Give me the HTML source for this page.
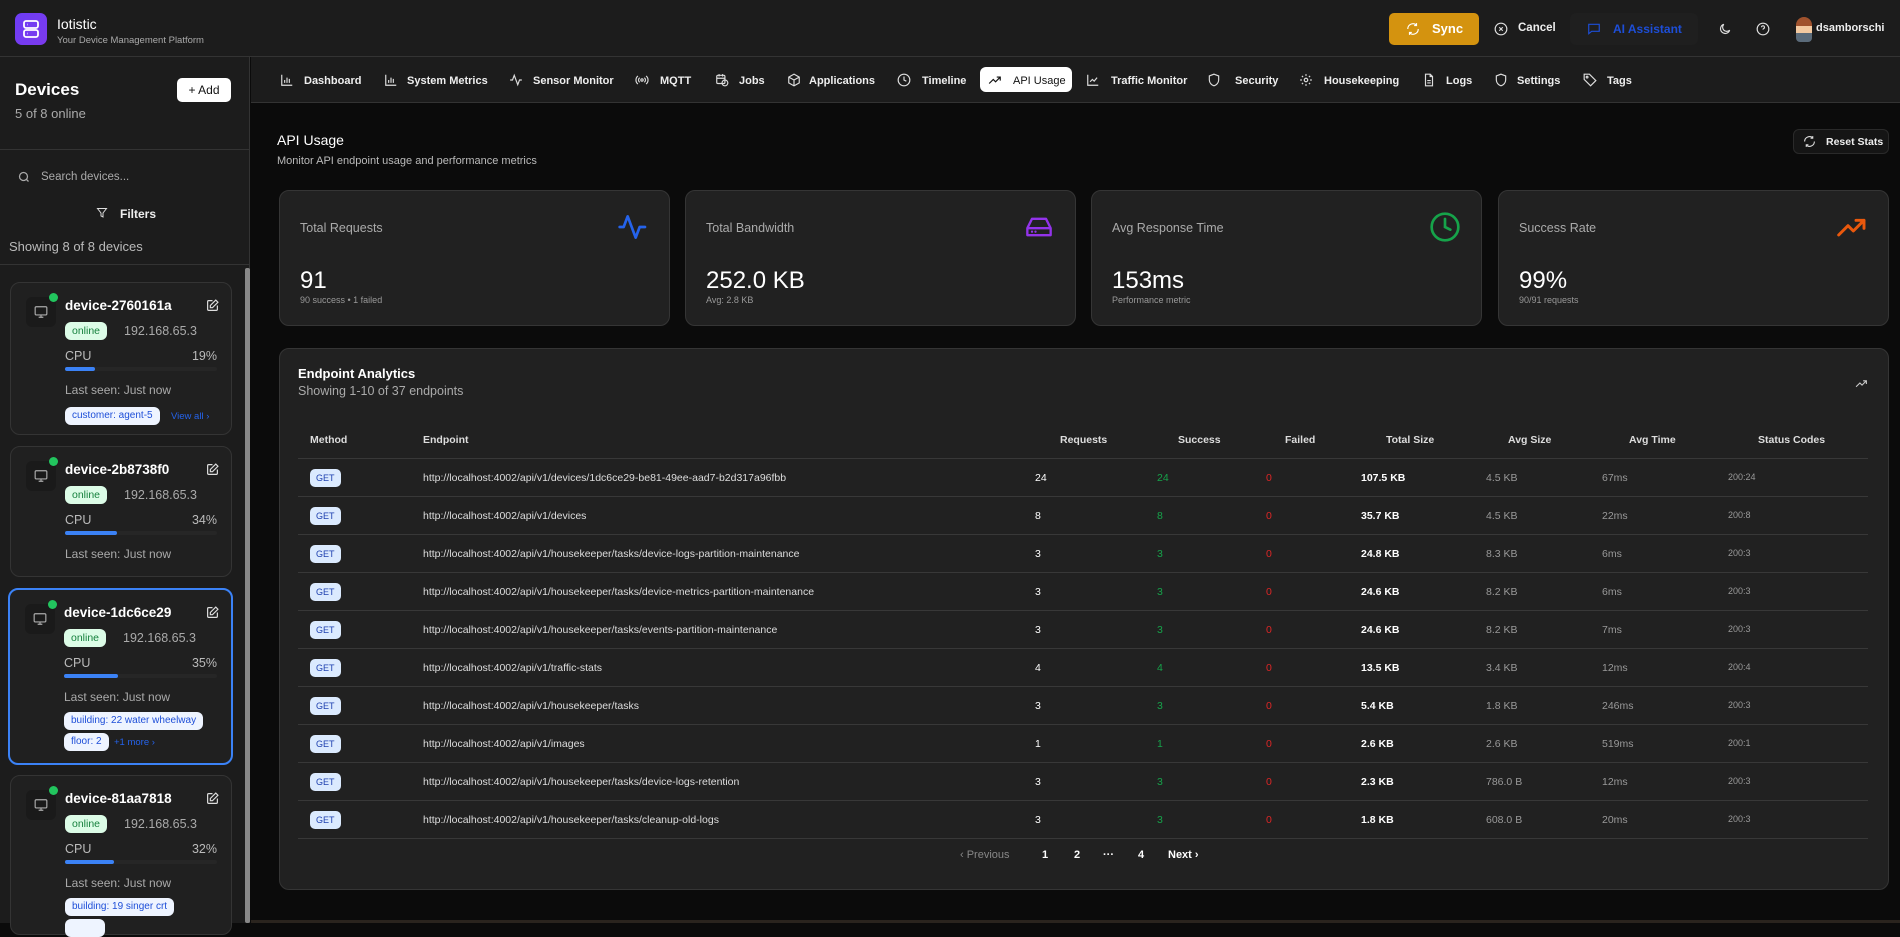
<!DOCTYPE html>
<html><head><meta charset="utf-8"><style>
*{box-sizing:border-box;margin:0;padding:0}
body{width:1900px;height:923px;overflow:hidden;background:#0b0b0b;font-family:"Liberation Sans",sans-serif;color:#fff;position:relative}
.a{position:absolute;white-space:nowrap}
svg{display:block}
.hdr{left:0;top:0;width:1900px;height:57px;background:#1c1c1c;border-bottom:1px solid #333}
.side{left:0;top:57px;width:250px;height:866px;background:#1c1c1c;border-right:1px solid #333;overflow:hidden}
.nav{left:251px;top:57px;width:1649px;height:46px;background:#1c1c1c;border-bottom:1px solid #333}
.tab{font-size:11px;font-weight:bold;color:#eee;top:74px;line-height:14px}
.ti{top:73px}
.card{background:#212121;border:1px solid #353535;border-radius:10px}
.dc{position:absolute;left:10px;width:222px;background:#202020;border:1px solid #343434;border-radius:10px}
.dc .nm{position:absolute;left:54px;top:14px;font-size:13.5px;font-weight:bold;line-height:18px}
.dc .dot{position:absolute;left:38px;top:10px;width:9px;height:9px;border-radius:50%;background:#22c55e}
.dc .ib{position:absolute;left:15px;top:14px;width:30px;height:30px;border-radius:6px;background:#1a1a1a}
.dc .bd{position:absolute;left:54px;top:39px;height:18px;line-height:18px;padding:0 7px;font-size:10.5px;border-radius:6px;background:#dcfce7;color:#15803d}
.dc .ip{position:absolute;left:113px;top:39px;font-size:12.5px;line-height:18px;color:#aaa}
.dc .cp{position:absolute;left:54px;top:66px;font-size:12.5px;color:#bbb}
.dc .pc{position:absolute;right:14px;top:66px;font-size:12.5px;color:#bbb}
.dc .bar{position:absolute;left:54px;right:14px;top:84px;height:4px;background:#262626;border-radius:2px}
.dc .bar i{display:block;height:4px;background:#3b82f6;border-radius:2px}
.dc .ls{position:absolute;left:54px;top:100px;font-size:12px;color:#aaa}
.tg{position:absolute;height:18px;line-height:18px;padding:0 7px;font-size:10px;border-radius:6px;background:#eef4ff;color:#1d4ed8;white-space:nowrap}
.lk{position:absolute;font-size:9.5px;color:#2563eb;white-space:nowrap}
.dc .ed{position:absolute;right:12px;top:16px}
.sl{font-size:12.5px;color:#aaa;left:20px;top:30px}
.sv{font-size:24px;left:20px;top:76px}
.ss{font-size:9px;color:#999;left:20px;top:104px}
.th{font-size:10.5px;font-weight:bold;color:#ddd;top:434px}
.row{position:absolute;left:298px;width:1570px;height:38px;border-top:1px solid #383838}
.c{position:absolute;top:13px;font-size:10.5px;white-space:nowrap}
.get{position:absolute;left:12px;top:10px;height:18px;line-height:18px;padding:0 6px;font-size:9px;border-radius:5px;background:#dbeafe;color:#1e40af}
</style></head><body>
<div class="a hdr"></div>
<div class="a" style="left:15px;top:13px;width:32px;height:32px;border-radius:7px;background:linear-gradient(135deg,#6d3df5,#7c3aed)">
<svg width="32" height="32" viewBox="0 0 32 32" fill="none" stroke="#fff" stroke-width="1.8"><rect x="9" y="8" width="14" height="7" rx="2"/><rect x="9" y="17" width="14" height="7" rx="2"/><line x1="12" y1="11.5" x2="12.5" y2="11.5"/><line x1="12" y1="20.5" x2="12.5" y2="20.5"/></svg></div>
<div class="a" style="left:57px;top:16px;font-size:14px;color:#fff">Iotistic</div>
<div class="a" style="left:57px;top:35px;font-size:9.5px;color:#aaa">Your Device Management Platform</div>
<div class="a" style="left:1389px;top:13px;width:90px;height:32px;border-radius:5px;background:#d4930f"></div>
<svg class="a" style="left:1406px;top:22px" width="14" height="14" viewBox="0 0 24 24" fill="none" stroke="#fff" stroke-width="2"><path d="M21 12a9 9 0 0 1-15.5 6.2M3 12A9 9 0 0 1 18.5 5.8M18 2v4h-4M6 22v-4h4"/></svg>
<div class="a" style="left:1432px;top:21px;font-size:13px;font-weight:bold;color:#fff">Sync</div>
<svg class="a" style="left:1494px;top:22px" width="14" height="14" viewBox="0 0 24 24" fill="none" stroke="#ddd" stroke-width="2"><circle cx="12" cy="12" r="10"/><path d="M9 9l6 6M15 9l-6 6"/></svg>
<div class="a" style="left:1518px;top:22px;font-size:11.5px;font-weight:bold;color:#eee">Cancel</div>
<div class="a" style="left:1570px;top:13px;width:128px;height:32px;border-radius:6px;background:#1f1f1f"></div>
<svg class="a" style="left:1587px;top:22px" width="14" height="14" viewBox="0 0 24 24" fill="none" stroke="#1d4ed8" stroke-width="2"><path d="M3 4h18v12H8l-5 4z"/></svg>
<div class="a" style="left:1613px;top:22px;font-size:12px;font-weight:bold;color:#1d4ed8">AI Assistant</div>
<svg class="a" style="left:1718px;top:22px" width="14" height="14" viewBox="0 0 24 24" fill="none" stroke="#ddd" stroke-width="2"><path d="M20 14A8 8 0 1 1 10 4a6 6 0 0 0 10 10z"/></svg>
<svg class="a" style="left:1756px;top:22px" width="14" height="14" viewBox="0 0 24 24" fill="none" stroke="#ddd" stroke-width="2"><circle cx="12" cy="12" r="10"/><path d="M9.5 9a2.5 2.5 0 1 1 3.5 2.3c-.7.4-1 1-1 1.7M12 17h.01"/></svg>
<div class="a" style="left:1796px;top:17px;width:16px;height:25px;border-radius:8px 8px 4px 4px;background:linear-gradient(#a0522d 0 35%,#f3c9a0 35% 65%,#5b6b7a 65%)"></div>
<div class="a" style="left:1816px;top:22px;font-size:11px;font-weight:bold;color:#eee">dsamborschi</div>

<div class="a side"></div>
<div class="a" style="left:15px;top:80px;font-size:17px;font-weight:bold">Devices</div>
<div class="a" style="left:15px;top:106px;font-size:13px;color:#aaa">5 of 8 online</div>
<div class="a" style="left:177px;top:78px;width:54px;height:24px;border-radius:5px;background:#fff;color:#111;font-size:12px;line-height:24px;text-align:center">+ Add</div>
<div class="a" style="left:0;top:149px;width:250px;height:1px;background:#333"></div>
<svg class="a" style="left:18px;top:171px" width="12" height="12" viewBox="0 0 24 24" fill="none" stroke="#aaa" stroke-width="2.5"><circle cx="11" cy="11" r="8"/><path d="M21 21l-4-4"/></svg>
<div class="a" style="left:41px;top:171px;font-size:11.5px;color:#aaa">Search devices...</div>
<svg class="a" style="left:96px;top:207px" width="12" height="12" viewBox="0 0 24 24" fill="none" stroke="#ddd" stroke-width="2"><path d="M3 3h18l-7 9v8l-4-2v-6z"/></svg>
<div class="a" style="left:120px;top:207px;font-size:12px;font-weight:bold;color:#eee">Filters</div>
<div class="a" style="left:9px;top:239px;font-size:13px;color:#bbb">Showing 8 of 8 devices</div>
<div class="a" style="left:0;top:264px;width:250px;height:1px;background:#333"></div>
<div class="a" style="left:245px;top:268px;width:5px;height:655px;background:#888;border-radius:2px"></div>

<div class="dc" style="top:282px;height:153px">
<div class="ib"><svg style="margin:8px" width="14" height="14" viewBox="0 0 24 24" fill="none" stroke="#aaa" stroke-width="2"><rect x="2" y="3" width="20" height="14" rx="2"/><path d="M8 21h8M12 17v4"/></svg></div><div class="dot"></div>
<div class="nm">device-2760161a</div>
<svg class="ed" width="13" height="13" viewBox="0 0 24 24" fill="none" stroke="#ddd" stroke-width="2.2"><path d="M12 3H5a2 2 0 0 0-2 2v14a2 2 0 0 0 2 2h14a2 2 0 0 0 2-2v-7"/><path d="M18 2l4 4-10 10H8v-4z"/></svg>
<div class="bd">online</div><div class="ip">192.168.65.3</div>
<div class="cp">CPU</div><div class="pc">19%</div><div class="bar"><i style="width:20%"></i></div>
<div class="ls">Last seen: Just now</div>
<div class="tg" style="left:54px;top:124px">customer: agent-5</div><div class="lk" style="left:160px;top:128px">View all ›</div>
</div>
<div class="dc" style="top:446px;height:131px">
<div class="ib"><svg style="margin:8px" width="14" height="14" viewBox="0 0 24 24" fill="none" stroke="#aaa" stroke-width="2"><rect x="2" y="3" width="20" height="14" rx="2"/><path d="M8 21h8M12 17v4"/></svg></div><div class="dot"></div>
<div class="nm">device-2b8738f0</div>
<svg class="ed" width="13" height="13" viewBox="0 0 24 24" fill="none" stroke="#ddd" stroke-width="2.2"><path d="M12 3H5a2 2 0 0 0-2 2v14a2 2 0 0 0 2 2h14a2 2 0 0 0 2-2v-7"/><path d="M18 2l4 4-10 10H8v-4z"/></svg>
<div class="bd">online</div><div class="ip">192.168.65.3</div>
<div class="cp">CPU</div><div class="pc">34%</div><div class="bar"><i style="width:34%"></i></div>
<div class="ls">Last seen: Just now</div>
</div>
<div class="dc" style="top:588px;height:177px;border:2px solid #3b82f6;left:8px;width:225px">
<div class="ib"><svg style="margin:8px" width="14" height="14" viewBox="0 0 24 24" fill="none" stroke="#aaa" stroke-width="2"><rect x="2" y="3" width="20" height="14" rx="2"/><path d="M8 21h8M12 17v4"/></svg></div><div class="dot"></div>
<div class="nm">device-1dc6ce29</div>
<svg class="ed" width="13" height="13" viewBox="0 0 24 24" fill="none" stroke="#ddd" stroke-width="2.2"><path d="M12 3H5a2 2 0 0 0-2 2v14a2 2 0 0 0 2 2h14a2 2 0 0 0 2-2v-7"/><path d="M18 2l4 4-10 10H8v-4z"/></svg>
<div class="bd">online</div><div class="ip">192.168.65.3</div>
<div class="cp">CPU</div><div class="pc">35%</div><div class="bar"><i style="width:35%"></i></div>
<div class="ls">Last seen: Just now</div>
<div class="tg" style="left:54px;top:122px">building: 22 water wheelway</div>
<div class="tg" style="left:54px;top:143px">floor: 2</div><div class="lk" style="left:104px;top:147px">+1 more ›</div>
</div>
<div class="dc" style="top:775px;height:160px">
<div class="ib"><svg style="margin:8px" width="14" height="14" viewBox="0 0 24 24" fill="none" stroke="#aaa" stroke-width="2"><rect x="2" y="3" width="20" height="14" rx="2"/><path d="M8 21h8M12 17v4"/></svg></div><div class="dot"></div>
<div class="nm">device-81aa7818</div>
<svg class="ed" width="13" height="13" viewBox="0 0 24 24" fill="none" stroke="#ddd" stroke-width="2.2"><path d="M12 3H5a2 2 0 0 0-2 2v14a2 2 0 0 0 2 2h14a2 2 0 0 0 2-2v-7"/><path d="M18 2l4 4-10 10H8v-4z"/></svg>
<div class="bd">online</div><div class="ip">192.168.65.3</div>
<div class="cp">CPU</div><div class="pc">32%</div><div class="bar"><i style="width:32%"></i></div>
<div class="ls">Last seen: Just now</div>
<div class="tg" style="left:54px;top:122px">building: 19 singer crt</div>
<div class="tg" style="left:54px;top:143px;width:40px"></div>
</div>

<div class="a nav"></div>
<div class="a" style="left:980px;top:67px;width:92px;height:25px;border-radius:6px;background:#fff"></div>
<svg class="a ti" style="left:280px" width="14" height="14" viewBox="0 0 24 24" fill="none" stroke="#ddd" stroke-width="2"><path d="M3 3v18h18M8 17v-5M12 17V8M16 17v-7"/></svg><div class="a tab" style="left:304px">Dashboard</div>
<svg class="a ti" style="left:384px" width="14" height="14" viewBox="0 0 24 24" fill="none" stroke="#ddd" stroke-width="2"><path d="M3 3v18h18M8 17v-5M12 17V8M16 17v-7"/></svg><div class="a tab" style="left:407px">System Metrics</div>
<svg class="a ti" style="left:509px" width="14" height="14" viewBox="0 0 24 24" fill="none" stroke="#ddd" stroke-width="2"><path d="M2 12h4l3-8 6 16 3-8h4"/></svg><div class="a tab" style="left:533px">Sensor Monitor</div>
<svg class="a ti" style="left:635px" width="14" height="14" viewBox="0 0 24 24" fill="none" stroke="#ddd" stroke-width="2"><circle cx="12" cy="12" r="2"/><path d="M8 8a5 5 0 0 0 0 8M16 8a5 5 0 0 1 0 8M5 5a9 9 0 0 0 0 14M19 5a9 9 0 0 1 0 14"/></svg><div class="a tab" style="left:660px">MQTT</div>
<svg class="a ti" style="left:715px" width="14" height="14" viewBox="0 0 24 24" fill="none" stroke="#ddd" stroke-width="2"><rect x="3" y="4" width="14" height="14" rx="2"/><path d="M7 2v4M13 2v4M3 9h14"/><circle cx="17" cy="17" r="5"/></svg><div class="a tab" style="left:739px">Jobs</div>
<svg class="a ti" style="left:787px" width="14" height="14" viewBox="0 0 24 24" fill="none" stroke="#ddd" stroke-width="2"><path d="M12 2l9 5v10l-9 5-9-5V7z"/><path d="M3 7l9 5 9-5M12 12v10"/></svg><div class="a tab" style="left:809px">Applications</div>
<svg class="a ti" style="left:897px" width="14" height="14" viewBox="0 0 24 24" fill="none" stroke="#ddd" stroke-width="2"><circle cx="12" cy="12" r="10"/><path d="M12 6v6l4 2"/></svg><div class="a tab" style="left:922px">Timeline</div>
<svg class="a ti" style="left:988px" width="14" height="14" viewBox="0 0 24 24" fill="none" stroke="#111" stroke-width="2"><path d="M2 18l7-7 4 4 8-8M15 7h6v6"/></svg><div class="a tab" style="left:1013px;color:#111;font-weight:normal">API Usage</div>
<svg class="a ti" style="left:1086px" width="14" height="14" viewBox="0 0 24 24" fill="none" stroke="#ddd" stroke-width="2"><path d="M3 3v18h18M7 15l4-4 3 3 5-6"/></svg><div class="a tab" style="left:1111px">Traffic Monitor</div>
<svg class="a ti" style="left:1207px" width="14" height="14" viewBox="0 0 24 24" fill="none" stroke="#ddd" stroke-width="2"><path d="M12 2l8 3v7c0 5-4 9-8 10-4-1-8-5-8-10V5z"/></svg><div class="a tab" style="left:1235px">Security</div>
<svg class="a ti" style="left:1299px" width="14" height="14" viewBox="0 0 24 24" fill="none" stroke="#ddd" stroke-width="2"><circle cx="12" cy="12" r="3"/><path d="M12 2v3M12 19v3M2 12h3M19 12h3M5 5l2 2M17 17l2 2M5 19l2-2M17 7l2-2"/></svg><div class="a tab" style="left:1324px">Housekeeping</div>
<svg class="a ti" style="left:1422px" width="14" height="14" viewBox="0 0 24 24" fill="none" stroke="#ddd" stroke-width="2"><path d="M14 2H6v20h12V6z"/><path d="M14 2v4h4M9 13h6M9 17h6"/></svg><div class="a tab" style="left:1446px">Logs</div>
<svg class="a ti" style="left:1494px" width="14" height="14" viewBox="0 0 24 24" fill="none" stroke="#ddd" stroke-width="2"><path d="M12 2l8 3v7c0 5-4 9-8 10-4-1-8-5-8-10V5z"/></svg><div class="a tab" style="left:1517px">Settings</div>
<svg class="a ti" style="left:1583px" width="14" height="14" viewBox="0 0 24 24" fill="none" stroke="#ddd" stroke-width="2"><path d="M2 2h9l11 11-9 9L2 11z"/><circle cx="7" cy="7" r="1.5"/></svg><div class="a tab" style="left:1607px">Tags</div>

<div class="a" style="left:277px;top:132px;font-size:14px">API Usage</div>
<div class="a" style="left:277px;top:155px;font-size:11px;color:#bbb">Monitor API endpoint usage and performance metrics</div>
<div class="a" style="left:1793px;top:129px;width:96px;height:25px;border-radius:6px;background:#151515;border:1px solid #2a2a2a"></div>
<svg class="a" style="left:1803px;top:135px" width="13" height="13" viewBox="0 0 24 24" fill="none" stroke="#ddd" stroke-width="2"><path d="M21 12a9 9 0 0 1-15.5 6.2M3 12A9 9 0 0 1 18.5 5.8M18 2v4h-4M6 22v-4h4"/></svg>
<div class="a" style="left:1826px;top:136px;font-size:10.5px;font-weight:bold;color:#eee">Reset Stats</div>

<div class="a card" style="left:279px;top:190px;width:391px;height:136px">
<div class="a sl">Total Requests</div><div class="a sv">91</div><div class="a ss">90 success • 1 failed</div>
<svg class="a" style="right:20px;top:20px" width="32" height="32" viewBox="0 0 24 24" fill="none" stroke="#2563eb" stroke-width="2" stroke-linecap="round" stroke-linejoin="round"><path d="M2 12h3l3-8 6 16 3-8h4"/></svg></div>
<div class="a card" style="left:685px;top:190px;width:391px;height:136px">
<div class="a sl">Total Bandwidth</div><div class="a sv">252.0 KB</div><div class="a ss">Avg: 2.8 KB</div>
<svg class="a" style="right:20px;top:22px" width="32" height="28" viewBox="0 0 24 24" fill="none" stroke="#9333ea" stroke-width="2" stroke-linecap="round" stroke-linejoin="round"><path d="M2 13h20v6H2zM2 13l4-8h12l4 8"/><path d="M6 16h.01M9 16h.01"/></svg></div>
<div class="a card" style="left:1091px;top:190px;width:391px;height:136px">
<div class="a sl">Avg Response Time</div><div class="a sv">153ms</div><div class="a ss">Performance metric</div>
<svg class="a" style="right:20px;top:20px" width="32" height="32" viewBox="0 0 24 24" fill="none" stroke="#16a34a" stroke-width="2" stroke-linecap="round"><circle cx="12" cy="12" r="10"/><path d="M12 6v6l4 2"/></svg></div>
<div class="a card" style="left:1498px;top:190px;width:391px;height:136px">
<div class="a sl">Success Rate</div><div class="a sv">99%</div><div class="a ss">90/91 requests</div>
<svg class="a" style="right:20px;top:20px" width="32" height="32" viewBox="0 0 24 24" fill="none" stroke="#ea580c" stroke-width="2.2" stroke-linecap="round" stroke-linejoin="round"><path d="M2 18l7-7 4 4 8-8M15 7h6v6"/></svg></div>

<div class="a card" style="left:279px;top:348px;width:1610px;height:542px"></div>
<div class="a" style="left:298px;top:366px;font-size:13px;font-weight:bold">Endpoint Analytics</div>
<div class="a" style="left:298px;top:384px;font-size:12.5px;color:#aaa">Showing 1-10 of 37 endpoints</div>
<svg class="a" style="left:1855px;top:377px" width="13" height="13" viewBox="0 0 24 24" fill="none" stroke="#ccc" stroke-width="2"><path d="M2 18l7-7 4 4 8-8M15 7h6v6"/></svg>

<div class="a th" style="left:310px">Method</div>
<div class="a th" style="left:423px">Endpoint</div>
<div class="a th" style="left:1060px">Requests</div>
<div class="a th" style="left:1178px">Success</div>
<div class="a th" style="left:1285px">Failed</div>
<div class="a th" style="left:1386px">Total Size</div>
<div class="a th" style="left:1508px">Avg Size</div>
<div class="a th" style="left:1629px">Avg Time</div>
<div class="a th" style="left:1758px">Status Codes</div>

<div class="row" style="top:458px"><div class="get">GET</div><div class="c" style="left:125px;color:#ddd">http://localhost:4002/api/v1/devices/1dc6ce29-be81-49ee-aad7-b2d317a96fbb</div><div class="c" style="left:737px">24</div><div class="c" style="left:859px;color:#16a34a">24</div><div class="c" style="left:968px;color:#dc2626">0</div><div class="c" style="left:1063px;font-weight:bold">107.5 KB</div><div class="c" style="left:1188px;color:#999">4.5 KB</div><div class="c" style="left:1304px;color:#999">67ms</div><div class="c" style="left:1430px;color:#999;font-size:9px">200:24</div></div>
<div class="row" style="top:496px"><div class="get">GET</div><div class="c" style="left:125px;color:#ddd">http://localhost:4002/api/v1/devices</div><div class="c" style="left:737px">8</div><div class="c" style="left:859px;color:#16a34a">8</div><div class="c" style="left:968px;color:#dc2626">0</div><div class="c" style="left:1063px;font-weight:bold">35.7 KB</div><div class="c" style="left:1188px;color:#999">4.5 KB</div><div class="c" style="left:1304px;color:#999">22ms</div><div class="c" style="left:1430px;color:#999;font-size:9px">200:8</div></div>
<div class="row" style="top:534px"><div class="get">GET</div><div class="c" style="left:125px;color:#ddd">http://localhost:4002/api/v1/housekeeper/tasks/device-logs-partition-maintenance</div><div class="c" style="left:737px">3</div><div class="c" style="left:859px;color:#16a34a">3</div><div class="c" style="left:968px;color:#dc2626">0</div><div class="c" style="left:1063px;font-weight:bold">24.8 KB</div><div class="c" style="left:1188px;color:#999">8.3 KB</div><div class="c" style="left:1304px;color:#999">6ms</div><div class="c" style="left:1430px;color:#999;font-size:9px">200:3</div></div>
<div class="row" style="top:572px"><div class="get">GET</div><div class="c" style="left:125px;color:#ddd">http://localhost:4002/api/v1/housekeeper/tasks/device-metrics-partition-maintenance</div><div class="c" style="left:737px">3</div><div class="c" style="left:859px;color:#16a34a">3</div><div class="c" style="left:968px;color:#dc2626">0</div><div class="c" style="left:1063px;font-weight:bold">24.6 KB</div><div class="c" style="left:1188px;color:#999">8.2 KB</div><div class="c" style="left:1304px;color:#999">6ms</div><div class="c" style="left:1430px;color:#999;font-size:9px">200:3</div></div>
<div class="row" style="top:610px"><div class="get">GET</div><div class="c" style="left:125px;color:#ddd">http://localhost:4002/api/v1/housekeeper/tasks/events-partition-maintenance</div><div class="c" style="left:737px">3</div><div class="c" style="left:859px;color:#16a34a">3</div><div class="c" style="left:968px;color:#dc2626">0</div><div class="c" style="left:1063px;font-weight:bold">24.6 KB</div><div class="c" style="left:1188px;color:#999">8.2 KB</div><div class="c" style="left:1304px;color:#999">7ms</div><div class="c" style="left:1430px;color:#999;font-size:9px">200:3</div></div>
<div class="row" style="top:648px"><div class="get">GET</div><div class="c" style="left:125px;color:#ddd">http://localhost:4002/api/v1/traffic-stats</div><div class="c" style="left:737px">4</div><div class="c" style="left:859px;color:#16a34a">4</div><div class="c" style="left:968px;color:#dc2626">0</div><div class="c" style="left:1063px;font-weight:bold">13.5 KB</div><div class="c" style="left:1188px;color:#999">3.4 KB</div><div class="c" style="left:1304px;color:#999">12ms</div><div class="c" style="left:1430px;color:#999;font-size:9px">200:4</div></div>
<div class="row" style="top:686px"><div class="get">GET</div><div class="c" style="left:125px;color:#ddd">http://localhost:4002/api/v1/housekeeper/tasks</div><div class="c" style="left:737px">3</div><div class="c" style="left:859px;color:#16a34a">3</div><div class="c" style="left:968px;color:#dc2626">0</div><div class="c" style="left:1063px;font-weight:bold">5.4 KB</div><div class="c" style="left:1188px;color:#999">1.8 KB</div><div class="c" style="left:1304px;color:#999">246ms</div><div class="c" style="left:1430px;color:#999;font-size:9px">200:3</div></div>
<div class="row" style="top:724px"><div class="get">GET</div><div class="c" style="left:125px;color:#ddd">http://localhost:4002/api/v1/images</div><div class="c" style="left:737px">1</div><div class="c" style="left:859px;color:#16a34a">1</div><div class="c" style="left:968px;color:#dc2626">0</div><div class="c" style="left:1063px;font-weight:bold">2.6 KB</div><div class="c" style="left:1188px;color:#999">2.6 KB</div><div class="c" style="left:1304px;color:#999">519ms</div><div class="c" style="left:1430px;color:#999;font-size:9px">200:1</div></div>
<div class="row" style="top:762px"><div class="get">GET</div><div class="c" style="left:125px;color:#ddd">http://localhost:4002/api/v1/housekeeper/tasks/device-logs-retention</div><div class="c" style="left:737px">3</div><div class="c" style="left:859px;color:#16a34a">3</div><div class="c" style="left:968px;color:#dc2626">0</div><div class="c" style="left:1063px;font-weight:bold">2.3 KB</div><div class="c" style="left:1188px;color:#999">786.0 B</div><div class="c" style="left:1304px;color:#999">12ms</div><div class="c" style="left:1430px;color:#999;font-size:9px">200:3</div></div>
<div class="row" style="top:800px"><div class="get">GET</div><div class="c" style="left:125px;color:#ddd">http://localhost:4002/api/v1/housekeeper/tasks/cleanup-old-logs</div><div class="c" style="left:737px">3</div><div class="c" style="left:859px;color:#16a34a">3</div><div class="c" style="left:968px;color:#dc2626">0</div><div class="c" style="left:1063px;font-weight:bold">1.8 KB</div><div class="c" style="left:1188px;color:#999">608.0 B</div><div class="c" style="left:1304px;color:#999">20ms</div><div class="c" style="left:1430px;color:#999;font-size:9px">200:3</div></div>
<div class="a" style="left:298px;top:838px;width:1570px;height:1px;background:#383838"></div>

<div class="a" style="left:960px;top:849px;font-size:11px;color:#888">‹ Previous</div>
<div class="a" style="left:1042px;top:849px;font-size:11px;font-weight:bold">1</div>
<div class="a" style="left:1074px;top:849px;font-size:11px;font-weight:bold">2</div>
<div class="a" style="left:1103px;top:849px;font-size:11px;font-weight:bold">···</div>
<div class="a" style="left:1138px;top:849px;font-size:11px;font-weight:bold">4</div>
<div class="a" style="left:1168px;top:849px;font-size:11px;font-weight:bold">Next ›</div>
<div class="a" style="left:251px;top:920px;width:1649px;height:3px;background:#2a241e"></div>
</body></html>
